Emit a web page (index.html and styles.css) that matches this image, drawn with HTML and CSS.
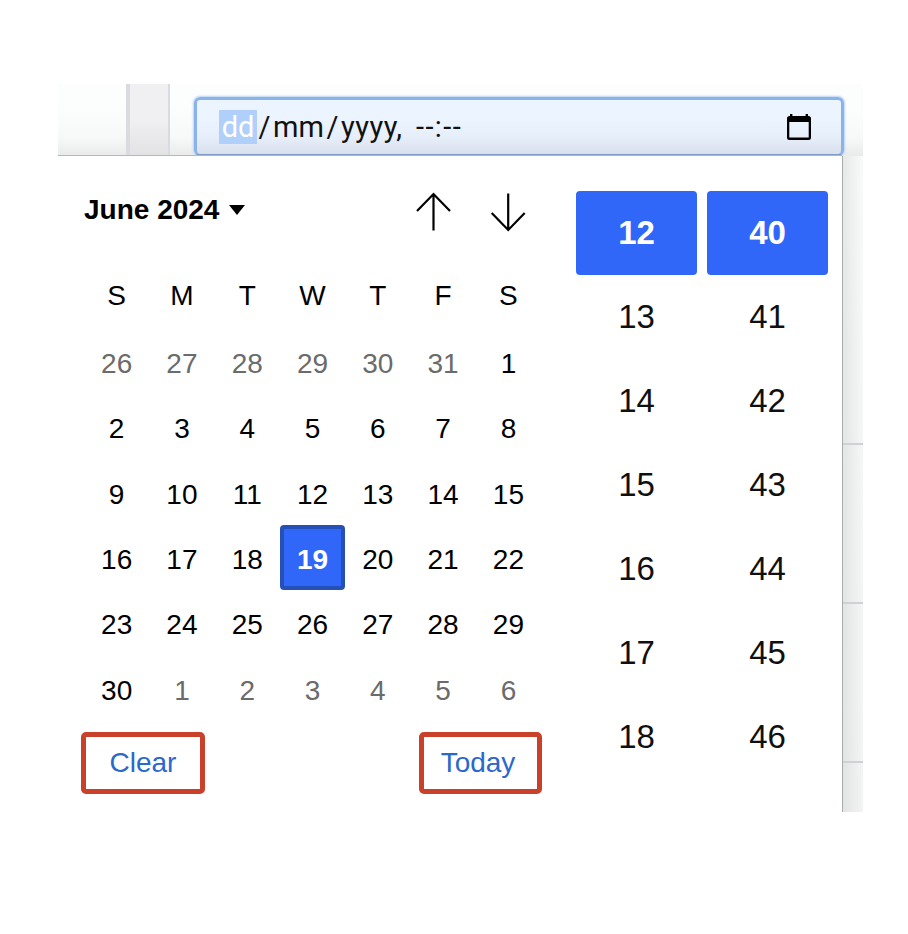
FILE: index.html
```
<!DOCTYPE html>
<html lang="en">
<head>
<meta charset="utf-8">
<title>Date and time picker</title>
<link rel="stylesheet" href="styles.css">
</head>
<body>
<main class="stage">
  <header class="form-strip">
    <div class="gutter"></div>
    <div class="field">
      <span class="selected">dd</span><span class="slash">/</span><span class="month">mm</span><span class="slash">/</span><span class="year">yyyy,</span><span class="time">--:--</span>
      <svg class="calendar-icon" width="26" height="28" viewBox="0 0 26 28"><path fill="#000" fill-rule="evenodd" d="M4 1h2.400v2h13.200V1H22v2h.5A2.500 2.500 0 0 1 25 5.500v19a2.500 2.500 0 0 1-2.500 2.500h-19A2.500 2.500 0 0 1 1 24.500v-19A2.500 2.500 0 0 1 3.500 3H4zM3.300 9v15.600h19.400V9z"/></svg>
    </div>
  </header>
  <div class="body">
    <section class="popup">
      <div class="calendar">
        <div class="heading">
          <span class="title">June 2024</span>
          <svg class="caret" width="16" height="10" viewBox="0 0 16 10"><path d="M0 0h16L8 10z"/></svg>
          <svg class="arrow up" width="36" height="40" viewBox="0 0 36 40"><path d="M18.500 38.500V2M2 19 18.500 2 35 19"/></svg>
          <svg class="arrow" width="36" height="40" viewBox="0 0 36 40"><path d="M18.200 1.500V38M1.700 21l16.500 17 16.500-17"/></svg>
        </div>
        <div class="weekdays"><span>S</span><span>M</span><span>T</span><span>W</span><span>T</span><span>F</span><span>S</span></div>
        <div class="days">
          <span class="out">26</span><span class="out">27</span><span class="out">28</span><span class="out">29</span><span class="out">30</span><span class="out">31</span><span>1</span>
          <span>2</span><span>3</span><span>4</span><span>5</span><span>6</span><span>7</span><span>8</span>
          <span>9</span><span>10</span><span>11</span><span>12</span><span>13</span><span>14</span><span>15</span>
          <span>16</span><span>17</span><span>18</span><span class="current">19</span><span>20</span><span>21</span><span>22</span>
          <span>23</span><span>24</span><span>25</span><span>26</span><span>27</span><span>28</span><span>29</span>
          <span>30</span><span class="out">1</span><span class="out">2</span><span class="out">3</span><span class="out">4</span><span class="out">5</span><span class="out">6</span>
        </div>
        <div class="actions"><span class="action clear">Clear</span><span class="action today">Today</span></div>
      </div>
      <div class="times">
        <span class="chosen">12</span><span class="chosen">40</span>
        <span>13</span><span>41</span>
        <span>14</span><span>42</span>
        <span>15</span><span>43</span>
        <span>16</span><span>44</span>
        <span>17</span><span>45</span>
        <span>18</span><span>46</span>
      </div>
    </section>
    <div class="edge"><i></i><i></i><i></i></div>
  </div>
</main>
</body>
</html>
```
FILE: styles.css
```
* { box-sizing: border-box; }
body { margin: 0; background: #fff; font-family: "Liberation Sans", Arial, sans-serif; color: #000; }
.stage { width: 805px; margin: 84px 0 0 58px; }
.form-strip {
  height: 72px;
  display: flex;
  background: linear-gradient(#fcfdfd 35%, #f7f8f8 75%, #e9eaea);
}
.gutter {
  width: 44px;
  margin-left: 68px;
  border-left: 4px solid #d9dbe0;
  border-right: 2px solid #d9dbe0;
  background: linear-gradient(#f0f0f3 50%, #e2e2e5);
}
.field {
  width: 650px;
  height: 59px;
  margin: 13px 0 0 24px;
  padding-left: 22px;
  display: flex;
  align-items: center;
  border: 3px solid #8ab4e8;
  border-bottom: 2px solid #7b9cc8;
  border-radius: 6px;
  box-shadow: 0 0 2px 1px #b9d5f6;
  background: linear-gradient(#ecf4ff 35%, #e6eefa 70%, #d9e0ec);
  font: 29px/34px Roboto, sans-serif;
  color: #111;
}
.selected { width: 38px; background: #b1cffb; color: #fff; text-align: center; }
.slash { width: 15px; text-align: center; }
.month { width: 53px; text-align: center; }
.year { width: 76px; padding-left: 1px; letter-spacing: .5px; }
.time { width: 60px; white-space: nowrap; letter-spacing: 1.400px; }
.calendar-icon { margin-left: 310px; }
.body { display: flex; height: 656px; }
.popup {
  width: 784px;
  display: flex;
  background: #fff;
  box-shadow: 0 -1px 0 #b5b7b8;
  position: relative;
}
.calendar { width: 518px; padding: 35px 0 0 26px; }
.heading { height: 73px; display: flex; align-items: flex-start; }
.title { width: 145px; font-size: 28px; font-weight: 700; line-height: 38px; white-space: nowrap; }
.caret { margin-top: 14px; }
.arrow { margin-top: 1px; fill: none; stroke: #000; stroke-width: 2.200; }
.up { margin: 1px 39px 0 170px; }
.weekdays, .days {
  display: grid;
  grid-template-columns: repeat(7, 65.300px);
  font-size: 28px;
  text-align: center;
}
.weekdays { line-height: 64px; }
.days { grid-auto-rows: 65.350px; margin-top: 1px; line-height: 70px; }
.out { color: #6b6b6b; }
.current {
  border: 4px solid #2450b8;
  border-radius: 4px;
  background: #3067f8;
  color: #fff;
  font-weight: 700;
  line-height: 62px;
}
.actions { display: flex; justify-content: space-between; margin: 11px 34px 0 -3px; }
.action {
  height: 62px;
  border: 5px solid #c9412b;
  border-radius: 5px;
  color: #2b68cc;
  font-size: 28px;
  line-height: 51px;
  text-align: center;
}
.clear { width: 124px; }
.today { width: 123px; padding-right: 5px; }
.times {
  display: grid;
  grid-template-columns: 121px 121px;
  grid-auto-rows: 84px;
  column-gap: 10px;
  height: 588px;
  margin-top: 35px;
  color: #101010;
  font-size: 33px;
  line-height: 84px;
  text-align: center;
}
.times .chosen { border-radius: 4px; background: #3067f8; color: #fff; font-weight: 700; line-height: 83px; }
.edge {
  width: 21px;
  border-left: 1px solid #a9acac;
  background: linear-gradient(90deg, rgba(90, 105, 100, .12), rgba(90, 105, 100, 0)), linear-gradient(#f9fbfa, #f6f8f7 30%, #f3f5f4);
}
.edge i { display: block; height: 2px; background: #cfd1d5; }
.edge i:first-child { margin-top: 287px; }
.edge i + i { margin-top: 157px; }
```
